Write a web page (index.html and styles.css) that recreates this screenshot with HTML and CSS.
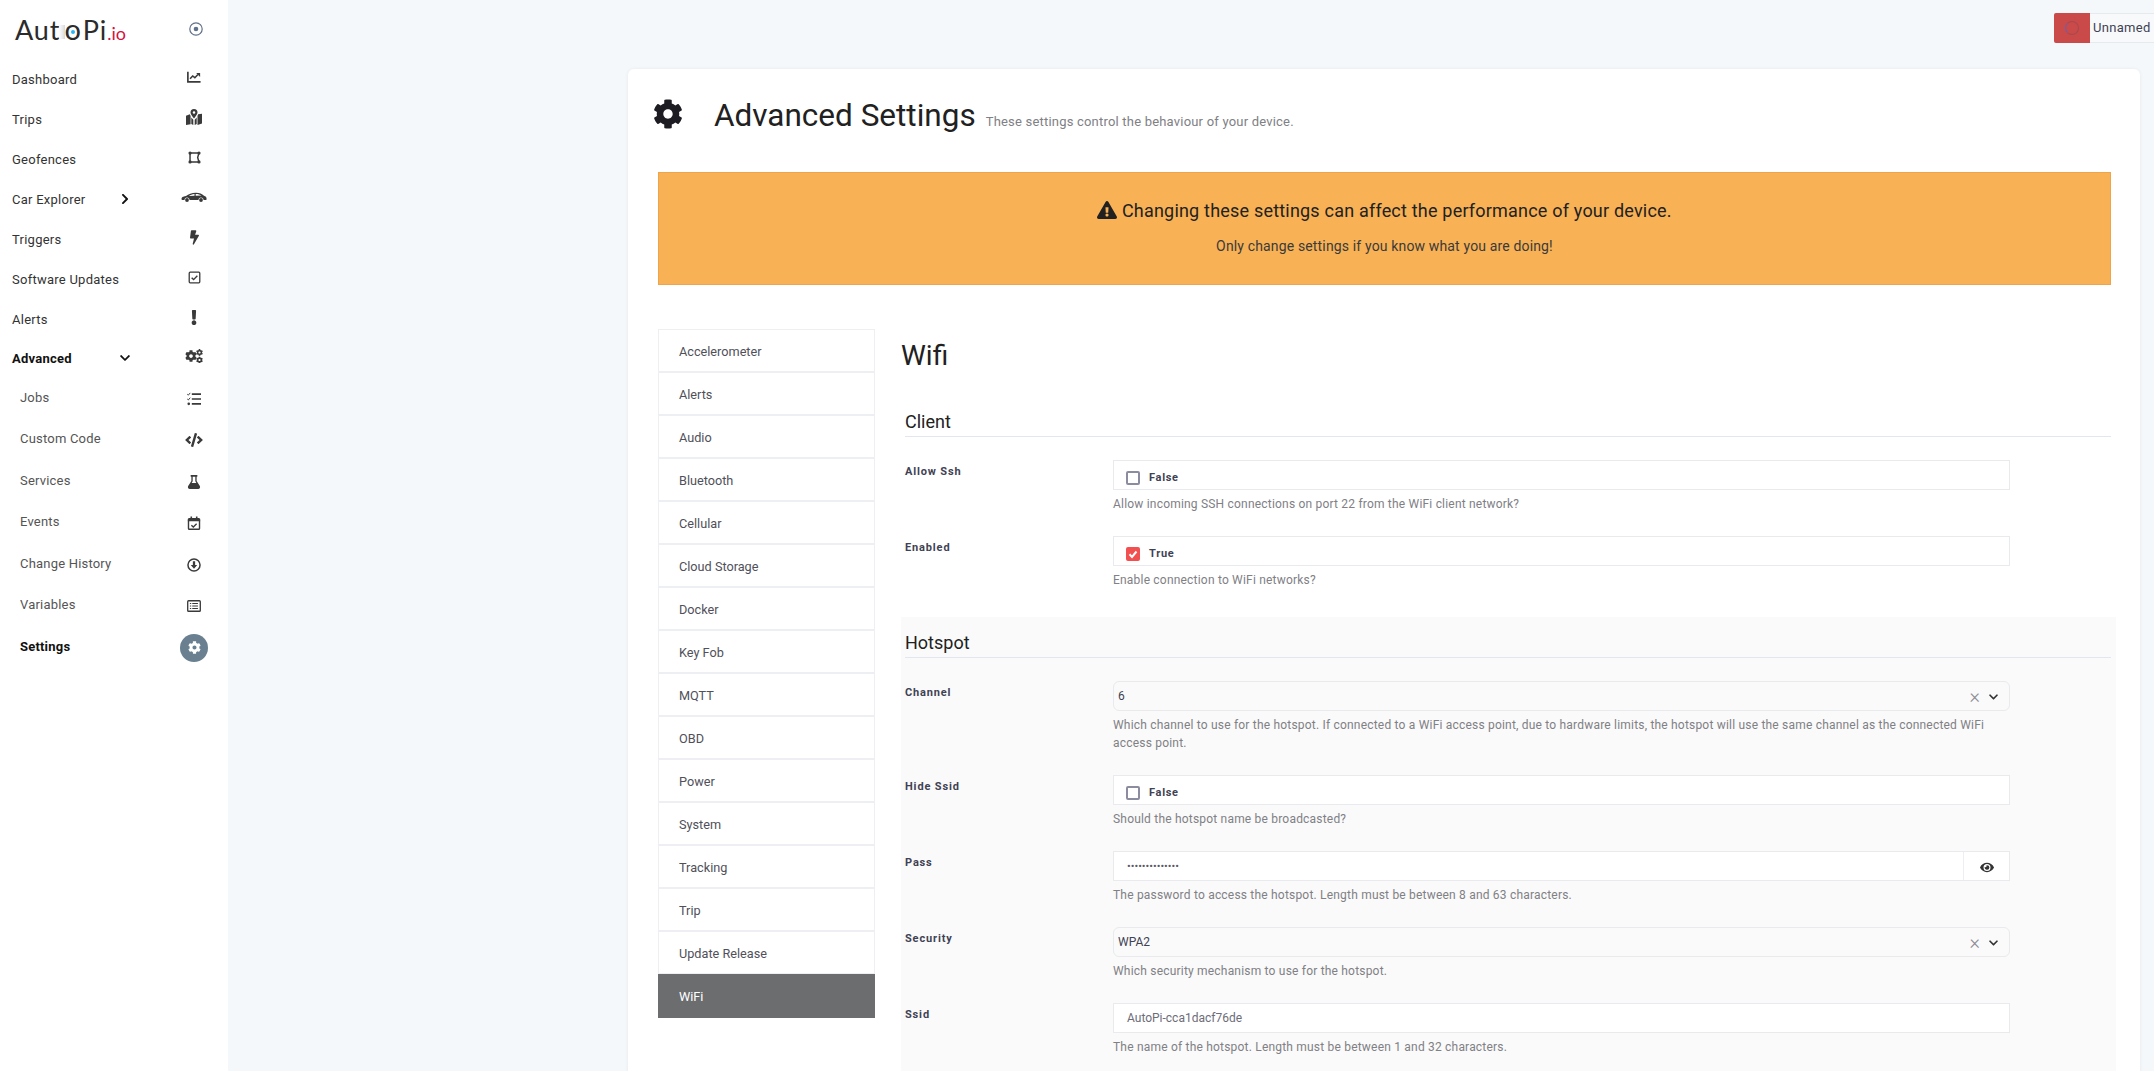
FILE: index.html
```html
<!DOCTYPE html>
<html lang="en">
<head>
    <meta charset="UTF-8">
    <meta name="viewport" content="width=device-width, initial-scale=1.0">
    <title>Advanced Settings</title>
    <link rel="stylesheet" href="styles.css">
</head>
<body>
    <svg class="sprite" xmlns="http://www.w3.org/2000/svg">
        <symbol id="i-cog" viewBox="0 0 512 512"><path d="M487.4 315.7l-42.6-24.6c4.3-23.2 4.3-47 0-70.2l42.6-24.6c4.9-2.8 7.1-8.6 5.5-14-11.1-35.6-30-67.8-54.7-94.6-3.8-4.1-10-5.1-14.8-2.3L380.8 110c-17.9-15.4-38.5-27.3-60.8-35.1V25.8c0-5.6-3.9-10.5-9.4-11.7-36.7-8.2-74.3-7.8-109.2 0-5.5 1.2-9.4 6.1-9.4 11.7V75c-22.2 7.9-42.8 19.8-60.8 35.1L88.7 85.5c-4.9-2.8-11-1.9-14.8 2.3-24.7 26.7-43.6 58.9-54.7 94.6-1.7 5.4.6 11.2 5.5 14L67.3 221c-4.3 23.2-4.3 47 0 70.2l-42.6 24.6c-4.9 2.8-7.1 8.6-5.5 14 11.1 35.6 30 67.8 54.7 94.6 3.8 4.1 10 5.1 14.8 2.3l42.6-24.6c17.9 15.4 38.5 27.3 60.8 35.1v49.2c0 5.6 3.9 10.5 9.4 11.7 36.7 8.2 74.3 7.8 109.2 0 5.5-1.2 9.4-6.1 9.4-11.7v-49.2c22.2-7.9 42.8-19.8 60.8-35.1l42.6 24.6c4.9 2.8 11 1.9 14.8-2.3 24.7-26.7 43.6-58.9 54.7-94.6 1.5-5.5-.7-11.3-5.6-14.1zM256 336c-44.1 0-80-35.9-80-80s35.9-80 80-80 80 35.9 80 80-35.9 80-80 80z"/></symbol>
        <symbol id="i-chev-down" viewBox="0 0 448 512"><path d="M207.029 381.476L12.686 187.132c-9.373-9.373-9.373-24.569 0-33.941l22.667-22.667c9.357-9.357 24.522-9.375 33.901-.04L224 284.505l154.745-154.021c9.379-9.335 24.544-9.317 33.901.04l22.667 22.667c9.373 9.373 9.373 24.569 0 33.941L240.971 381.476c-9.373 9.372-24.569 9.372-33.942 0z"/></symbol>
        <symbol id="i-chev-right" viewBox="0 0 320 512"><path d="M285.476 272.971L91.132 467.314c-9.373 9.373-24.569 9.373-33.941 0l-22.667-22.667c-9.357-9.357-9.375-24.522-.04-33.901L188.505 256 34.484 101.255c-9.335-9.379-9.317-24.544.04-33.901l22.667-22.667c9.373-9.373 24.569-9.373 33.941 0L285.475 239.03c9.373 9.372 9.373 24.568.001 33.941z"/></symbol>
        <symbol id="i-warn" viewBox="0 0 576 512"><path d="M569.517 440.013C587.975 472.007 564.806 512 527.94 512H48.054c-36.937 0-59.999-40.055-41.577-71.987L246.423 24.035c18.467-32.009 64.72-31.951 83.154 0l239.94 416.978zM288 354c-25.405 0-46 20.595-46 46s20.595 46 46 46 46-20.595 46-46-20.595-46-46-46zm-43.673-165.346l7.418 136c.347 6.364 5.609 11.346 11.982 11.346h48.546c6.373 0 11.635-4.982 11.982-11.346l7.418-136c.375-6.874-5.098-12.654-11.982-12.654h-63.383c-6.884 0-12.356 5.78-11.981 12.654z"/></symbol>
        <symbol id="i-chart" viewBox="0 0 16 16"><path d="M1 2v11.600h14.500" fill="none" stroke="currentColor" stroke-width="1.900"/><path d="M3.500 10l3-3.200 2.500 2 3.500-3.600" fill="none" stroke="currentColor" stroke-width="1.800"/><path d="M10.500 3.500H15V8z"/></symbol>
        <symbol id="i-map" viewBox="0 0 16 16"><path d="M8 0a3.500 3.500 0 0 0-3.500 3.500c0 1.700 2.300 4.500 3.500 5.900 1.200-1.400 3.500-4.200 3.500-5.900A3.500 3.500 0 0 0 8 0zm0 2.200a1.300 1.300 0 1 1 0 2.600 1.300 1.300 0 0 1 0-2.600z" fill-rule="evenodd"/><path d="M0 6.800l3.900-1.500.7 1.800v8.100L0 16zM5.300 8.500l2 2.200v5.300l-2-1zM8.700 10.700l2-2.200v6.500l-2 1zM11.500 6.900l.6-1.600L16 4.800v9.700l-4.500 1.500z"/></symbol>
        <symbol id="i-vector" viewBox="0 0 16 16"><path d="M2.500 2.500h11l-1.600 5.500 1.600 5.500h-11z" fill="none" stroke="currentColor" stroke-width="1.800"/><circle cx="2.500" cy="2.500" r="2"/><circle cx="13.500" cy="2.500" r="2"/><circle cx="2.500" cy="13.500" r="2"/><circle cx="13.500" cy="13.500" r="2"/></symbol>
        <symbol id="i-car" viewBox="0 0 26 10"><path d="M0.500 7.200C0.200 5.500 2 4.600 5 4.100 7.500 2.200 10.500 0.800 15 0.800c3.500 0 6 1.200 8 3 1.500 0.400 2.700 1.500 2.600 3.200l-0.300 1H22.500a2.500 2.500 0 0 0-5 0H8.500a2.500 2.500 0 0 0-5 0H1zM8 3.900l5.500-0.200V1.900C11 2 9.300 2.800 8 3.900zM14.700 3.700l5.800-0.100C19.200 2.500 17.200 1.900 14.700 1.900z" fill-rule="evenodd"/><circle cx="6" cy="8" r="1.900"/><circle cx="20" cy="8" r="1.900"/></symbol>
        <symbol id="i-bolt" viewBox="0 0 320 512"><path d="M296 160H180.600l42.600-129.800C227.200 15 215.700 0 200 0H56C44 0 33.800 8.900 32.200 20.800l-32 240C-1.700 275.200 9.500 288 24 288h118.700L96.600 482.500c-3.600 15.200 8 29.500 23.300 29.500 8.400 0 16.400-4.400 20.800-12l176-304c9.300-15.900-2.200-36-20.700-36z"/></symbol>
        <symbol id="i-check-square" viewBox="0 0 16 16"><rect x="1.500" y="1.500" width="13" height="13" rx="1.200" fill="none" stroke="currentColor" stroke-width="1.600"/><path d="M4.500 8.200l2.400 2.400 4.600-4.800" fill="none" stroke="currentColor" stroke-width="1.700"/></symbol>
        <symbol id="i-exclaim" viewBox="0 0 192 512"><path d="M176 432c0 44.112-35.888 80-80 80s-80-35.888-80-80 35.888-80 80-80 80 35.888 80 80zM25.260 25.199l13.600 272C39.499 309.972 50.041 320 62.830 320h66.340c12.789 0 23.331-10.028 23.970-22.801l13.600-272C167.425 11.490 156.496 0 142.770 0H49.230C35.504 0 24.575 11.490 25.260 25.199z"/></symbol>
        <symbol id="i-tasks" viewBox="0 0 16 16"><path d="M5.500 2.500H16M5.500 8H16M5.500 13.500H16" fill="none" stroke="currentColor" stroke-width="1.900"/><path d="M0.300 2.500l1.200 1.100 2.200-2.600M0.300 8l1.200 1.100 2.200-2.600" fill="none" stroke="currentColor" stroke-width="1.100"/><circle cx="2" cy="13.500" r="1.500"/></symbol>
        <symbol id="i-code" viewBox="0 0 640 512"><path d="M278.900 511.500l-61-17.700c-6.400-1.800-10-8.500-8.200-14.900L346.200 8.700c1.800-6.400 8.500-10.100 14.900-8.200l61 17.700c6.400 1.800 10 8.500 8.200 14.900L293.800 503.300c-1.900 6.400-8.500 10.100-14.900 8.200zm-114-112.200l43.500-46.400c4.600-4.900 4.300-12.700-.8-17.200L117 256l90.600-79.700c5.100-4.500 5.500-12.300.8-17.200l-43.500-46.400c-4.500-4.800-12.100-5.100-17-.5L3.800 247.200c-5.100 4.700-5.100 12.800 0 17.500l144.100 135.100c4.900 4.600 12.500 4.400 17-.5zm327.200.6l144.100-135.100c5.100-4.700 5.100-12.800 0-17.500L492.100 112.100c-4.800-4.500-12.400-4.300-17 .5L431.600 159c-4.600 4.900-4.300 12.700.8 17.200L523 256l-90.600 79.700c-5.100 4.500-5.500 12.300-.8 17.200l43.500 46.400c4.500 4.900 12.100 5.100 17 .6z"/></symbol>
        <symbol id="i-flask" viewBox="0 0 448 512"><path fill-rule="evenodd" d="M437.200 403.500L320 215V64h8c13.300 0 24-10.700 24-24V24c0-13.300-10.700-24-24-24H120c-13.300 0-24 10.700-24 24v16c0 13.300 10.700 24 24 24h8v151L10.800 403.500C-18.500 450.600 15.300 512 70.900 512h306.200c55.700 0 89.400-61.500 60.100-108.500zM176 64h96v165l38 62H138l38-62z"/></symbol>
        <symbol id="i-calendar" viewBox="0 0 16 16"><rect x="1.700" y="3.200" width="12.600" height="12" rx="1" fill="none" stroke="currentColor" stroke-width="1.600"/><path d="M1 3h14v3H1zM4 0.500h1.800v3H4zM10.200 0.500h1.800v3h-1.800z"/><path d="M5 10.500l2.200 2.100 3.800-3.800" fill="none" stroke="currentColor" stroke-width="1.500"/></symbol>
        <symbol id="i-arrow-down" viewBox="0 0 16 16"><circle cx="8" cy="8" r="6.900" fill="none" stroke="currentColor" stroke-width="1.700"/><path d="M6.700 3.800h2.600v4.200h2.400L8 12.300 4.300 8h2.400z"/></symbol>
        <symbol id="i-list" viewBox="0 0 16 16"><rect x="0.800" y="2" width="14.400" height="12" rx="1" fill="none" stroke="currentColor" stroke-width="1.500"/><path d="M6 5.200h6.500M6 8h6.500M6 10.800h6.500M3.300 5.200h1.500M3.300 8h1.500M3.300 10.800h1.500" fill="none" stroke="currentColor" stroke-width="1.300"/></symbol>
        <symbol id="i-eye" viewBox="0 0 576 512"><path d="M572.520 241.400C518.290 135.590 410.930 64 288 64S57.680 135.640 3.480 241.410a32.350 32.350 0 0 0 0 29.190C57.710 376.410 165.070 448 288 448s230.320-71.640 284.520-177.410a32.350 32.350 0 0 0 0-29.190zM288 400a144 144 0 1 1 144-144 143.930 143.930 0 0 1-144 144zm0-240a95.310 95.310 0 0 0-25.310 3.790 47.850 47.850 0 0 1-66.900 66.900A95.780 95.780 0 1 0 288 160z"/></symbol>
    </svg>

    <aside class="sidebar">
        <div class="side-head">
            <div class="logo">Aut<span class="logo-o">o</span>Pi<span class="logo-io">.io</span></div>
            <svg class="collapse-icon" viewBox="0 0 14 14"><circle cx="7" cy="7" r="6.200" fill="none" stroke="currentColor" stroke-width="1.200"/><circle cx="7" cy="7" r="2.300" fill="currentColor"/></svg>
        </div>
        <nav>
            <a class="nav-row">
                <span class="nav-label">Dashboard</span>
                <span class="nav-icon"><svg class="ico-14"><use href="#i-chart"/></svg></span>
            </a>
            <a class="nav-row">
                <span class="nav-label">Trips</span>
                <span class="nav-icon"><svg class="ico-16"><use href="#i-map"/></svg></span>
            </a>
            <a class="nav-row">
                <span class="nav-label">Geofences</span>
                <span class="nav-icon"><svg class="ico-13"><use href="#i-vector"/></svg></span>
            </a>
            <a class="nav-row">
                <span class="nav-label">Car Explorer</span>
                <span class="nav-chev"><svg class="chev-right"><use href="#i-chev-right"/></svg></span>
                <span class="nav-icon"><svg class="ico-car"><use href="#i-car"/></svg></span>
            </a>
            <a class="nav-row">
                <span class="nav-label">Triggers</span>
                <span class="nav-icon"><svg class="ico-bolt"><use href="#i-bolt"/></svg></span>
            </a>
            <a class="nav-row">
                <span class="nav-label">Software Updates</span>
                <span class="nav-icon"><svg class="ico-13"><use href="#i-check-square"/></svg></span>
            </a>
            <a class="nav-row">
                <span class="nav-label">Alerts</span>
                <span class="nav-icon"><svg class="ico-exclaim"><use href="#i-exclaim"/></svg></span>
            </a>
            <a class="nav-row nav-open">
                <span class="nav-label">Advanced</span>
                <span class="nav-chev"><svg class="chev-down"><use href="#i-chev-down"/></svg></span>
                <span class="nav-icon">
                    <svg class="ico-cogs" viewBox="0 0 18 14">
                        <use href="#i-cog" x="0" y="1" width="12" height="12"/>
                        <use href="#i-cog" x="11" y="0" width="7" height="7"/>
                        <use href="#i-cog" x="11" y="7.500" width="7" height="7"/>
                    </svg>
                </span>
            </a>
            <a class="nav-row nav-sub">
                <span class="nav-label">Jobs</span>
                <span class="nav-icon"><svg class="ico-14"><use href="#i-tasks"/></svg></span>
            </a>
            <a class="nav-row nav-sub">
                <span class="nav-label">Custom Code</span>
                <span class="nav-icon"><svg class="ico-code"><use href="#i-code"/></svg></span>
            </a>
            <a class="nav-row nav-sub">
                <span class="nav-label">Services</span>
                <span class="nav-icon"><svg class="ico-14"><use href="#i-flask"/></svg></span>
            </a>
            <a class="nav-row nav-sub">
                <span class="nav-label">Events</span>
                <span class="nav-icon"><svg class="ico-14"><use href="#i-calendar"/></svg></span>
            </a>
            <a class="nav-row nav-sub">
                <span class="nav-label">Change History</span>
                <span class="nav-icon"><svg class="ico-14"><use href="#i-arrow-down"/></svg></span>
            </a>
            <a class="nav-row nav-sub">
                <span class="nav-label">Variables</span>
                <span class="nav-icon"><svg class="ico-14"><use href="#i-list"/></svg></span>
            </a>
            <a class="nav-row nav-sub nav-current">
                <span class="nav-label">Settings</span>
                <span class="nav-icon"><span class="nav-bubble"><svg class="ico-12"><use href="#i-cog"/></svg></span></span>
            </a>
        </nav>
    </aside>

    <main class="main">
        <div class="topbar">
            <div class="device-chip">
                <span class="device-status"><span class="spinner"></span></span>
                <span class="device-name">Unnamed</span>
            </div>
        </div>

        <section class="card">
            <header class="card-head">
                <svg class="head-icon"><use href="#i-cog"/></svg>
                <h1 class="head-title">Advanced Settings</h1>
                <span class="head-sub">These settings control the behaviour of your device.</span>
            </header>

            <div class="warning">
                <p class="warning-title"><svg class="warning-icon"><use href="#i-warn"/></svg> Changing these settings can affect the performance of your device.</p>
                <p class="warning-text">Only change settings if you know what you are doing!</p>
            </div>

            <div class="settings">
                <ul class="tabs">
                    <li class="tab">Accelerometer</li>
                    <li class="tab">Alerts</li>
                    <li class="tab">Audio</li>
                    <li class="tab">Bluetooth</li>
                    <li class="tab">Cellular</li>
                    <li class="tab">Cloud Storage</li>
                    <li class="tab">Docker</li>
                    <li class="tab">Key Fob</li>
                    <li class="tab">MQTT</li>
                    <li class="tab">OBD</li>
                    <li class="tab">Power</li>
                    <li class="tab">System</li>
                    <li class="tab">Tracking</li>
                    <li class="tab">Trip</li>
                    <li class="tab">Update Release</li>
                    <li class="tab tab-active">WiFi</li>
                </ul>

                <div class="form">
                    <h2 class="form-title">Wifi</h2>

                    <div class="group">
                        <h3 class="group-title">Client</h3>
                        <div class="field">
                            <label class="field-label">Allow Ssh</label>
                            <div>
                                <div class="box box-check"><span class="check"></span>False</div>
                                <p class="help">Allow incoming SSH connections on port 22 from the WiFi client network?</p>
                            </div>
                        </div>
                        <div class="field">
                            <label class="field-label">Enabled</label>
                            <div>
                                <div class="box box-check">
                                    <span class="check check-on"><svg viewBox="0 0 14 14"><path d="M3.500 7.300l2.500 2.600 4.500-5.400" fill="none" stroke="#fff" stroke-width="2"/></svg></span>True
                                </div>
                                <p class="help">Enable connection to WiFi networks?</p>
                            </div>
                        </div>
                    </div>

                    <div class="group group-shaded">
                        <h3 class="group-title">Hotspot</h3>
                        <div class="field">
                            <label class="field-label">Channel</label>
                            <div>
                                <div class="box box-select">
                                    <span class="select-value">6</span>
                                    <span class="select-clear">×</span>
                                    <svg class="select-chev"><use href="#i-chev-down"/></svg>
                                </div>
                                <p class="help">Which channel to use for the hotspot. If connected to a WiFi access point, due to hardware limits, the hotspot will use the same channel as the connected WiFi access point.</p>
                            </div>
                        </div>
                        <div class="field">
                            <label class="field-label">Hide Ssid</label>
                            <div>
                                <div class="box box-check"><span class="check"></span>False</div>
                                <p class="help">Should the hotspot name be broadcasted?</p>
                            </div>
                        </div>
                        <div class="field">
                            <label class="field-label">Pass</label>
                            <div>
                                <div class="box box-pass">
                                    <span class="pass-dots">••••••••••••••</span>
                                    <span class="pass-eye"><svg class="ico-eye"><use href="#i-eye"/></svg></span>
                                </div>
                                <p class="help">The password to access the hotspot. Length must be between 8 and 63 characters.</p>
                            </div>
                        </div>
                        <div class="field">
                            <label class="field-label">Security</label>
                            <div>
                                <div class="box box-select">
                                    <span class="select-value">WPA2</span>
                                    <span class="select-clear">×</span>
                                    <svg class="select-chev"><use href="#i-chev-down"/></svg>
                                </div>
                                <p class="help">Which security mechanism to use for the hotspot.</p>
                            </div>
                        </div>
                        <div class="field">
                            <label class="field-label">Ssid</label>
                            <div>
                                <div class="box box-text">AutoPi-cca1dacf76de</div>
                                <p class="help">The name of the hotspot. Length must be between 1 and 32 characters.</p>
                            </div>
                        </div>
                    </div>
                </div>
            </div>
        </section>
    </main>
</body>
</html>
```

FILE: styles.css
```css
* {
    box-sizing: border-box;
}

html, body {
    height: 100%;
    margin: 0;
    overflow: hidden;
}

body {
    display: flex;
    background-color: #f5f8fa;
    color: #212529;
    font-family: Roboto, sans-serif;
    font-size: 13px;
}

h1, h2, h3, p, ul {
    margin: 0;
    padding: 0;
    font-weight: 400;
}

svg {
    fill: currentColor;
    display: block;
}

.sprite {
    display: none;
}

/* sidebar */
.sidebar {
    width: 228px;
    flex-shrink: 0;
    background-color: #fff;
}

.side-head {
    height: 59px;
    padding: 13px 15px 0 15px;
    display: flex;
    justify-content: space-between;
}

.logo {
    font-family: Lato, sans-serif;
    font-size: 27px;
    line-height: 32px;
    color: #2b2b2b;
    letter-spacing: 0.9px;
}

.logo-o {
    position: relative;
    margin: 0 1px 0 4px;
    font-size: 29px;
    color: #2b2b2b;
}

/* grey streak on the left of the o */
.logo-o::before {
    content: "";
    position: absolute;
    left: -5px;
    top: 14px;
    width: 6px;
    height: 14px;
    background: linear-gradient(to right, #fff, #c9c9c9);
    opacity: 0.7;
}

.logo-o::after {
    content: "";
    position: absolute;
    left: 7px;
    top: 19px;
    width: 4px;
    height: 4px;
    border-radius: 50%;
    background-color: #29b6f6;
}

.logo-io {
    font-size: 18px;
    color: #d5103f;
    letter-spacing: 0;
    margin-left: 0;
}

.collapse-icon {
    width: 14px;
    height: 14px;
    margin: 9px 10px 0 0;
    color: #5f708a;
}

.nav-row {
    height: 40px;
    padding-left: 12px;
    display: flex;
    align-items: center;
    color: #333;
    letter-spacing: 0.25px;
}

.nav-label {
    width: 96px;
    white-space: nowrap;
}

.nav-chev {
    width: 34px;
    display: flex;
    justify-content: center;
    color: #111;
}

.nav-icon {
    width: 40px;
    margin-left: auto;
    margin-right: 14px;
    margin-top: -4px;
    display: flex;
    justify-content: center;
    color: #3a3a3a;
}

.nav-open {
    height: 38px;
    font-weight: 700;
    color: #111;
}

.nav-sub {
    height: 41.5px;
    padding-left: 20px;
    color: #555;
    letter-spacing: 0.2px;
}

.nav-sub .nav-label {
    width: 88px;
    margin-top: -1px;
}

.nav-sub .nav-icon {
    margin-top: 2px;
}

.nav-current {
    font-weight: 700;
    color: #111;
}

.nav-bubble {
    width: 28px;
    height: 28px;
    border-radius: 50%;
    background-color: #6a8090;
    color: #fff;
    display: flex;
    align-items: center;
    justify-content: center;
}

.ico-16 { width: 16px; height: 16px; }
.ico-14 { width: 14px; height: 14px; }
.ico-13 { width: 13px; height: 13px; }
.ico-12 { width: 13px; height: 13px; }
.ico-car { width: 26px; height: 10px; }
.ico-bolt { width: 9px; height: 15px; }
.ico-exclaim { width: 6px; height: 15px; }
.ico-cogs { width: 18px; height: 14px; }
.ico-code { width: 18px; height: 14px; }
.chev-right { width: 8px; height: 12px; }
.chev-down { width: 10px; height: 12px; }

/* main */
.main {
    flex: 1;
    padding: 13px 14px 0 400px;
    min-width: 0;
}

.topbar {
    height: 30px;
    margin-right: -14px;
    margin-bottom: 26px;
    display: flex;
    justify-content: flex-end;
}

.device-chip {
    width: 100px;
    display: flex;
    border: 1px solid #e6e9ed;
    border-right: none;
    border-radius: 3px 0 0 3px;
    background-color: #f7f9fb;
}

.device-status {
    width: 36px;
    margin: -1px 0 -1px -1px;
    flex-shrink: 0;
    background-color: #c94a48;
    border-radius: 2px 0 0 2px;
    display: flex;
    align-items: center;
    justify-content: center;
}

.spinner {
    width: 14px;
    height: 14px;
    border-radius: 50%;
    border: 1px solid #a8484e;
    border-left-color: #6a5fb0;
}

.device-name {
    padding-left: 3px;
    line-height: 28px;
    color: #3f4254;
    white-space: nowrap;
    letter-spacing: 0.3px;
}

.card {
    height: 1100px;
    padding: 0 29px 0 30px;
    background-color: #fff;
    border-radius: 6px;
    box-shadow: 0 0 4px rgba(0, 0, 0, 0.06);
}

.card-head {
    height: 103px;
    padding-top: 30px;
    margin-left: -5px;
    display: flex;
    align-items: flex-start;
}

.head-icon {
    width: 30px;
    height: 30px;
    flex-shrink: 0;
    color: #1c1c22;
}

.head-title {
    margin-left: 31px;
    margin-top: 1px;
    font-size: 31.5px;
    line-height: 32px;
    color: #212121;
}

.head-sub {
    margin: 15px 0 0 10px;
    line-height: 16px;
    color: #808085;
    letter-spacing: 0.2px;
}

.warning {
    height: 113px;
    padding-top: 26px;
    background-color: #f8b155;
    border: 1px solid #eea448;
    text-align: center;
}

.warning-title {
    font-size: 18px;
    line-height: 24px;
    letter-spacing: 0.2px;
    color: #212121;
}

.warning-icon {
    display: inline-block;
    width: 20px;
    height: 18px;
    vertical-align: -2px;
}

.warning-text {
    margin-top: 14px;
    font-size: 14px;
    line-height: 18px;
    letter-spacing: 0.15px;
    color: #3a3a3a;
}

.settings {
    margin-top: 44px;
    display: flex;
    align-items: flex-start;
}

.tabs {
    width: 217px;
    flex-shrink: 0;
    list-style: none;
    border-top: 1px solid #edeff2;
}

.tab {
    height: 43px;
    padding-left: 20px;
    font-size: 12.7px;
    line-height: 43px;
    color: #50505a;
    background-color: #fff;
    border: 1px solid #edeff2;
    border-top: none;
    border-width: 0 1px 2px 1px;
}

.tab-active {
    height: 44px;
    margin-top: -1px;
    padding-top: 1px;
    color: #fff;
    background-color: #6c6d6f;
    border-color: #6c6d6f;
}

.form {
    flex: 1;
    min-width: 0;
    margin-left: 26px;
    margin-right: -5px;
}

.form-title {
    margin-top: 11px;
    margin-bottom: 39px;
    font-size: 28px;
    line-height: 32px;
    color: #212121;
}

.group {
    padding: 0 5px 0 4px;
}

.group-shaded {
    margin-top: 28px;
    padding-top: 15px;
    padding-bottom: 40px;
    background-color: #fafafa;
}

.group-title {
    margin-bottom: 23px;
    padding-bottom: 3px;
    font-size: 18px;
    line-height: 22px;
    color: #212121;
    border-bottom: 1px solid #e4e6ef;
}

.field {
    margin-bottom: 23px;
    display: grid;
    grid-template-columns: 208px 897px;
}

.field-label {
    padding-top: 5px;
    font-size: 11px;
    line-height: 14px;
    font-weight: 700;
    letter-spacing: 0.85px;
    color: #3f4254;
}

.box {
    height: 30px;
    border: 1px solid #e8eaed;
    background-color: #fff;
    font-size: 12px;
}

.box-check {
    padding: 5px 0 0 12px;
    display: flex;
    align-items: center;
    font-size: 11px;
    font-weight: 700;
    letter-spacing: 0.7px;
    color: #3f4254;
}

.check {
    width: 14px;
    height: 14px;
    margin-right: 9px;
    border: 2px solid #8c8ca0;
    border-radius: 2px;
    background-color: #fff;
}

.check-on {
    border: none;
    background-color: #f25050;
}

.box-select {
    padding-left: 4px;
    display: flex;
    align-items: center;
    background-color: transparent;
    border-radius: 6px;
    color: #3f4254;
}

.select-value {
    flex: 1;
}

.select-clear {
    margin-right: 9px;
    font-size: 20px;
    line-height: 20px;
    font-weight: 300;
    color: #8a8a94;
}

.select-chev {
    width: 9px;
    height: 12px;
    margin: 2px 11px 0 0;
    color: #333;
}

.box-pass {
    display: flex;
    align-items: center;
}

.pass-dots {
    flex: 1;
    padding-left: 13px;
    font-size: 11px;
    color: #5a5a66;
}

.pass-eye {
    width: 46px;
    height: 100%;
    display: flex;
    align-items: center;
    justify-content: center;
    border-left: 1px solid #eceef1;
    color: #333;
}

.ico-eye {
    width: 14px;
    height: 13px;
    margin-top: 3px;
}

.box-text {
    padding-left: 13px;
    line-height: 28px;
    color: #6d6d78;
}

.help {
    margin-top: 5px;
    font-size: 12px;
    line-height: 18px;
    letter-spacing: 0.2px;
    color: #808085;
}
```
